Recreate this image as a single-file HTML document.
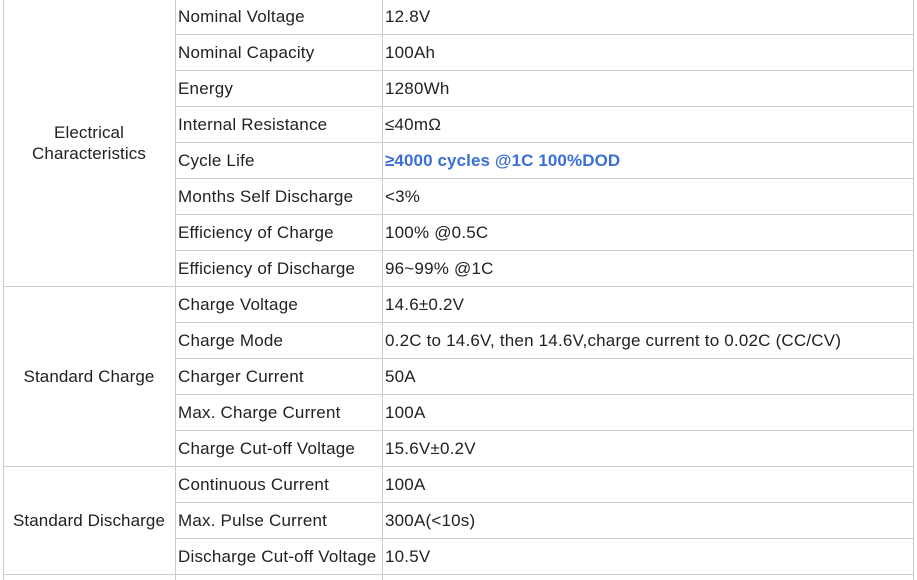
<!DOCTYPE html>
<html><head><meta charset="utf-8"><style>
html,body{margin:0;padding:0;background:#fff;width:917px;height:580px;overflow:hidden;position:relative;font-family:"Liberation Sans",Arial,sans-serif;font-size:17px;color:#222;letter-spacing:0.2px}
.h{position:absolute;height:1px;background:#ccc}
.v{position:absolute;width:1px;background:#ccc;top:0;height:580px}
.t{position:absolute;height:36px;line-height:36px;white-space:nowrap;margin-top:1px}
.c1{position:absolute;left:3px;width:172px;text-align:center;line-height:21px;letter-spacing:0.1px}
.b{color:#3a6fd8;font-weight:bold;letter-spacing:0.1px}
</style></head><body>
<div class="v" style="left:3px"></div>
<div class="v" style="left:175px"></div>
<div class="v" style="left:382px"></div>
<div class="v" style="left:913px"></div>

<div class="h" style="top:34px;left:175px;width:739px"></div>
<div class="h" style="top:70px;left:175px;width:739px"></div>
<div class="h" style="top:106px;left:175px;width:739px"></div>
<div class="h" style="top:142px;left:175px;width:739px"></div>
<div class="h" style="top:178px;left:175px;width:739px"></div>
<div class="h" style="top:214px;left:175px;width:739px"></div>
<div class="h" style="top:250px;left:175px;width:739px"></div>
<div class="h" style="top:286px;left:3px;width:911px"></div>
<div class="h" style="top:322px;left:175px;width:739px"></div>
<div class="h" style="top:358px;left:175px;width:739px"></div>
<div class="h" style="top:394px;left:175px;width:739px"></div>
<div class="h" style="top:430px;left:175px;width:739px"></div>
<div class="h" style="top:466px;left:3px;width:911px"></div>
<div class="h" style="top:502px;left:175px;width:739px"></div>
<div class="h" style="top:538px;left:175px;width:739px"></div>
<div class="h" style="top:574px;left:3px;width:911px"></div>

<div class="c1" style="top:122px">Electrical<br>Characteristics</div>
<div class="c1" style="top:366px">Standard Charge</div>
<div class="c1" style="top:510px">Standard Discharge</div>

<div class="t" style="top:-2px;left:178px">Nominal Voltage</div><div class="t" style="top:-2px;left:385px">12.8V</div>
<div class="t" style="top:34px;left:178px">Nominal Capacity</div><div class="t" style="top:34px;left:385px">100Ah</div>
<div class="t" style="top:70px;left:178px">Energy</div><div class="t" style="top:70px;left:385px">1280Wh</div>
<div class="t" style="top:106px;left:178px">Internal Resistance</div><div class="t" style="top:106px;left:385px">≤40mΩ</div>
<div class="t" style="top:142px;left:178px">Cycle Life</div><div class="t b" style="top:142px;left:385px">≥4000 cycles @1C 100%DOD</div>
<div class="t" style="top:178px;left:178px">Months Self Discharge</div><div class="t" style="top:178px;left:385px">&lt;3%</div>
<div class="t" style="top:214px;left:178px">Efficiency of Charge</div><div class="t" style="top:214px;left:385px">100% @0.5C</div>
<div class="t" style="top:250px;left:178px">Efficiency of Discharge</div><div class="t" style="top:250px;left:385px">96~99% @1C</div>
<div class="t" style="top:286px;left:178px">Charge Voltage</div><div class="t" style="top:286px;left:385px">14.6±0.2V</div>
<div class="t" style="top:322px;left:178px">Charge Mode</div><div class="t" style="top:322px;left:385px">0.2C to 14.6V, then 14.6V,charge current to 0.02C (CC/CV)</div>
<div class="t" style="top:358px;left:178px">Charger Current</div><div class="t" style="top:358px;left:385px">50A</div>
<div class="t" style="top:394px;left:178px">Max. Charge Current</div><div class="t" style="top:394px;left:385px">100A</div>
<div class="t" style="top:430px;left:178px">Charge Cut-off Voltage</div><div class="t" style="top:430px;left:385px">15.6V±0.2V</div>
<div class="t" style="top:466px;left:178px">Continuous Current</div><div class="t" style="top:466px;left:385px">100A</div>
<div class="t" style="top:502px;left:178px">Max. Pulse Current</div><div class="t" style="top:502px;left:385px">300A(&lt;10s)</div>
<div class="t" style="top:538px;left:178px">Discharge Cut-off Voltage</div><div class="t" style="top:538px;left:385px">10.5V</div>
</body></html>
